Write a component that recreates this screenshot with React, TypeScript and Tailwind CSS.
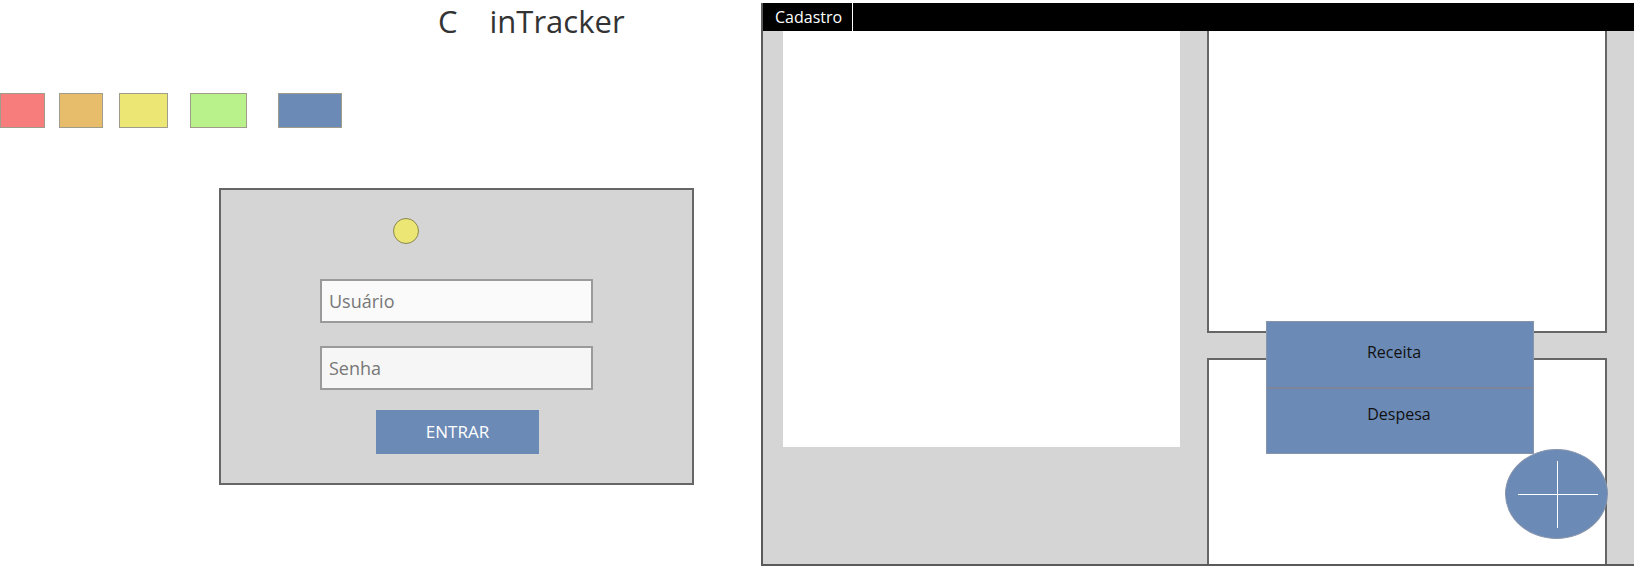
import React from 'react';

const swatches = [
  { color: 'bg-[#f77c7c]', cls: 'ml-0 w-[45px]' },
  { color: 'bg-[#e7bc6b]', cls: 'ml-[14px] w-[44px]' },
  { color: 'bg-[#ece674]', cls: 'ml-[16px] w-[49px]' },
  { color: 'bg-[#b9f28a]', cls: 'ml-[22px] w-[57px]' },
  { color: 'bg-[#6c8ab6]', cls: 'ml-[31px] w-[64px]' },
];

const LoginScreen: React.FC = () => (
  <div className="w-[761px] shrink-0">
    {/* titulo - o "o" era uma moeda */}
    <div className="flex items-baseline pl-[438px] pt-[1px] h-[40px] text-[31px] leading-[40px] text-[#333]">
      <span>C</span>
      <span className="ml-[32px]">inTracker</span>
    </div>

    <div className="flex mt-[53px] h-[35px]">
      {swatches.map((s, i) => (
        <div key={i} className={`${s.cls} ${s.color} h-full border border-[#a09c8c]`}></div>
      ))}
    </div>

    <div className="ml-[219px] mt-[60px] w-[475px] h-[297px] bg-[#d6d5d6] border-2 border-[#666] flex flex-col">
      <div className="ml-[172px] mt-[28px] w-[26px] h-[26px] rounded-full bg-[#ece674] border border-[#8a8650]"></div>
      <div className="ml-[99px] mt-[35px] w-[273px] h-[44px] bg-[#fafafa] border-2 border-[#9a9a9a] flex items-center pl-[7px] text-[18px] text-[#777]">
        Usuário
      </div>
      <div className="ml-[99px] mt-[23px] w-[273px] h-[44px] bg-[#f6f6f6] border-2 border-[#9a9a9a] flex items-center pl-[7px] text-[18px] text-[#777]">
        Senha
      </div>
      <button className="ml-[155px] mt-[20px] w-[163px] h-[44px] bg-[#6c8ab6] text-white text-[17px] flex items-center justify-center">
        ENTRAR
      </button>
    </div>
  </div>
);

const CadastroScreen: React.FC = () => (
  <div className="flex-1 mt-[3px] h-[563px] border-l-2 border-b-2 border-[#5a5a5a] flex flex-col">
    <div className="h-[28px] bg-black flex shrink-0">
      <div className="w-[90px] border-r border-white flex items-center pl-[12px] text-white text-[16px]">
        Cadastro
      </div>
    </div>

    <div className="flex-1 flex bg-[#d6d5d6]">
      <div className="pl-[20px] w-[444px] shrink-0">
        <div className="w-[397px] h-[416px] bg-white"></div>
      </div>

      <div className="relative w-[400px] shrink-0 flex flex-col">
        <div className="h-[302px] bg-white border-l-2 border-r-2 border-b-2 border-[#666]"></div>
        <div className="h-[25px]"></div>
        <div className="flex-1 bg-white border-l-2 border-r-2 border-t-2 border-[#666]"></div>

        {/* menu receita / despesa */}
        <div className="absolute left-[59px] top-[290px] w-[268px] h-[133px] bg-[#6c8ab6] border border-[#8794ab] flex flex-col text-[16px] text-[#111]">
          <div className="h-[67px] border-b-2 border-[#7d8699] flex justify-center pt-[18px] pr-[12px]">Receita</div>
          <div className="flex-1 flex justify-center pt-[13px] pr-[2px]">Despesa</div>
        </div>

        <div className="absolute left-[298px] top-[418px] w-[103px] h-[90px] rounded-[50%] bg-[#6c8ab6] border border-[#8794ab]">
          <div className="absolute left-[12px] top-[44px] w-[80px] h-px bg-white"></div>
          <div className="absolute left-[51px] top-[11px] w-px h-[67px] bg-white"></div>
        </div>
      </div>

      <div className="flex-1"></div>
    </div>
  </div>
);

export default function App() {
  return (
    <div className="flex w-[1634px] h-[567px] overflow-hidden bg-white font-['Open_Sans','Noto_Sans',sans-serif]">
      <LoginScreen />
      <CadastroScreen />
    </div>
  );
}
